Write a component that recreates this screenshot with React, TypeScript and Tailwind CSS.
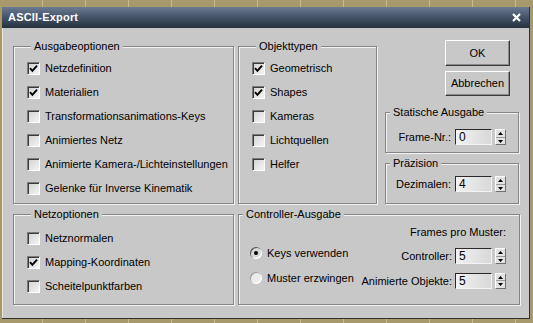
import type { ReactNode } from "react";

const Check = ({ checked }: { checked?: boolean }) => (
  <span className="w-[13px] h-[13px] shrink-0 flex items-center justify-center border border-t-[#7a7a7a] border-l-[#7a7a7a] border-b-white border-r-white bg-[linear-gradient(135deg,#d2d2d2,#f4f4f4)] shadow-[inset_1px_1px_0_#3a3a3a]">
    {checked && (
      <svg width="9" height="9" viewBox="0 0 9 9">
        <path d="M1 4.2 L3.4 6.8 L8 1.6" stroke="#000" strokeWidth="1.9" fill="none" />
      </svg>
    )}
  </span>
);

const Radio = ({ on }: { on?: boolean }) => (
  <span className={`w-[12px] h-[12px] shrink-0 rounded-full flex items-center justify-center ${on ? "bg-[#d8d8d8] shadow-[inset_1px_1px_0_#555,inset_-1px_-1px_0_#fff]" : "bg-[#ececec] shadow-[inset_1px_1px_0_#9a9a9a,inset_-1px_-1px_0_#fff]"}`}>
    {on && <span className="w-[4px] h-[4px] rounded-full bg-black" />}
  </span>
);

const Spin = ({ value }: { value: string }) => (
  <div className="flex items-center">
    <span className="w-[37px] h-[16px] pl-[3px] leading-[14px] text-[12px] border border-t-[#2a2a2a] border-l-[#2a2a2a] border-b-[#f4f4f4] border-r-[#f4f4f4] bg-[linear-gradient(90deg,#f2f2f2,#d8d8d8)]">
      {value}
    </span>
    <span className="ml-[3px] w-[11px] h-[16px] flex flex-col bg-[#e2e2e2] border border-t-white border-l-white border-b-[#707070] border-r-[#707070]">
      <span className="flex-1 flex items-center justify-center border-b border-[#9a9a9a]">
        <svg width="5" height="3" viewBox="0 0 5 3"><path d="M0 3 L2.5 0 L5 3 Z" fill="#000" /></svg>
      </span>
      <span className="flex-1 flex items-center justify-center">
        <svg width="5" height="3" viewBox="0 0 5 3"><path d="M0 0 L2.5 3 L5 0 Z" fill="#000" /></svg>
      </span>
    </span>
  </div>
);

const Group = ({ title, className, children }: { title: string; className: string; children: ReactNode }) => (
  <fieldset className={`border border-[#858585] shadow-[inset_1px_1px_0_#f2f2f2,1px_1px_0_#f2f2f2] ${className}`}>
    <legend className="ml-[4px] px-[3px] leading-[13px] bg-[#c8c8c8]">{title}</legend>
    {children}
  </fieldset>
);

const Row = ({ label, checked }: { label: string; checked?: boolean }) => (
  <div className="h-[24px] flex items-center gap-[5px]">
    <Check checked={checked} />
    <span>{label}</span>
  </div>
);

const Btn = ({ children, className = "" }: { children: ReactNode; className?: string }) => (
  <button className={`w-[65px] flex items-center justify-center bg-[#c8c8c8] border border-t-white border-l-white border-b-[#3a3a3a] border-r-[#3a3a3a] shadow-[inset_-1px_-1px_0_#8a8a8a] ${className}`}>
    {children}
  </button>
);

export default function App() {
  return (
    <div className="w-[533px] h-[323px] overflow-hidden pt-[7px] pl-[2px] bg-[#a8996c] bg-[repeating-linear-gradient(90deg,transparent_0,transparent_42px,#c9bb8c_42px,#c9bb8c_43px)] font-['Liberation_Sans',Arial,sans-serif] text-[11px] text-black">
      <div className="w-[528px] h-[312px] flex flex-col border-r border-b border-[#303030]">
        <div className="h-[21px] shrink-0 flex items-center justify-between pl-[6px] pr-[8px] bg-[linear-gradient(180deg,#6b7b92_0%,#47566b_45%,#26313f_100%)]">
          <span className="text-white font-bold text-[11px] tracking-[0.2px]">ASCII-Export</span>
          <svg width="9" height="9" viewBox="0 0 9 9">
            <path d="M1 1 L8 8 M8 1 L1 8" stroke="#fff" strokeWidth="2.2" />
          </svg>
        </div>
        <div className="flex-1 bg-[#c8c8c8] pl-[10px] pt-[12px] border-l border-[#e6e6e6]">
          <div className="flex h-[164px]">
            <Group title="Ausgabeoptionen" className="w-[221px] h-[164px] pl-[13px] pt-[3px]">
              <Row label="Netzdefinition" checked />
              <Row label="Materialien" checked />
              <Row label="Transformationsanimations-Keys" />
              <Row label="Animiertes Netz" />
              <Row label="Animierte Kamera-/Lichteinstellungen" />
              <Row label="Gelenke für Inverse Kinematik" />
            </Group>
            <Group title="Objekttypen" className="ml-[4px] w-[139px] h-[164px] pl-[13px] pt-[3px]">
              <Row label="Geometrisch" checked />
              <Row label="Shapes" checked />
              <Row label="Kameras" />
              <Row label="Lichtquellen" />
              <Row label="Helfer" />
            </Group>
            <div className="ml-[8px] w-[134px] flex flex-col">
              <div className="pl-[60px] flex flex-col">
                <Btn className="h-[26px]">OK</Btn>
                <Btn className="h-[25px] mt-[5px]">Abbrechen</Btn>
              </div>
              <Group title="Statische Ausgabe" className="mt-[10px] h-[47px] pt-[10px] pr-[12px]">
                <div className="flex items-center justify-end">
                  <span className="mr-[4px]">Frame-Nr.:</span>
                  <Spin value="0" />
                </div>
              </Group>
              <Group title="Präzision" className="mt-[4px] h-[47px] pt-[6px] pr-[12px]">
                <div className="flex items-center justify-end">
                  <span className="mr-[4px]">Dezimalen:</span>
                  <Spin value="4" />
                </div>
              </Group>
            </div>
          </div>
          <div className="flex mt-[4px] h-[97px]">
            <Group title="Netzoptionen" className="w-[221px] h-[97px] pl-[13px] pt-[5px]">
              <Row label="Netznormalen" />
              <Row label="Mapping-Koordinaten" checked />
              <Row label="Scheitelpunktfarben" />
            </Group>
            <Group title="Controller-Ausgabe" className="ml-[4px] w-[282px] h-[97px] pt-[5px]">
              <div className="flex justify-between">
                <div className="pl-[11px] pt-[19px] flex flex-col gap-[9px]">
                  <div className="h-[16px] flex items-center gap-[5px]">
                    <Radio on />
                    <span>Keys verwenden</span>
                  </div>
                  <div className="h-[16px] flex items-center gap-[5px]">
                    <Radio />
                    <span>Muster erzwingen</span>
                  </div>
                </div>
                <div className="pr-[13px] flex flex-col items-end">
                  <span className="leading-[13px]">Frames pro Muster:</span>
                  <div className="mt-[9px] flex items-center">
                    <span className="mr-[3px]">Controller:</span>
                    <Spin value="5" />
                  </div>
                  <div className="mt-[8px] flex items-center">
                    <span className="mr-[3px]">Animierte Objekte:</span>
                    <Spin value="5" />
                  </div>
                </div>
              </div>
            </Group>
          </div>
        </div>
      </div>
    </div>
  );
}
